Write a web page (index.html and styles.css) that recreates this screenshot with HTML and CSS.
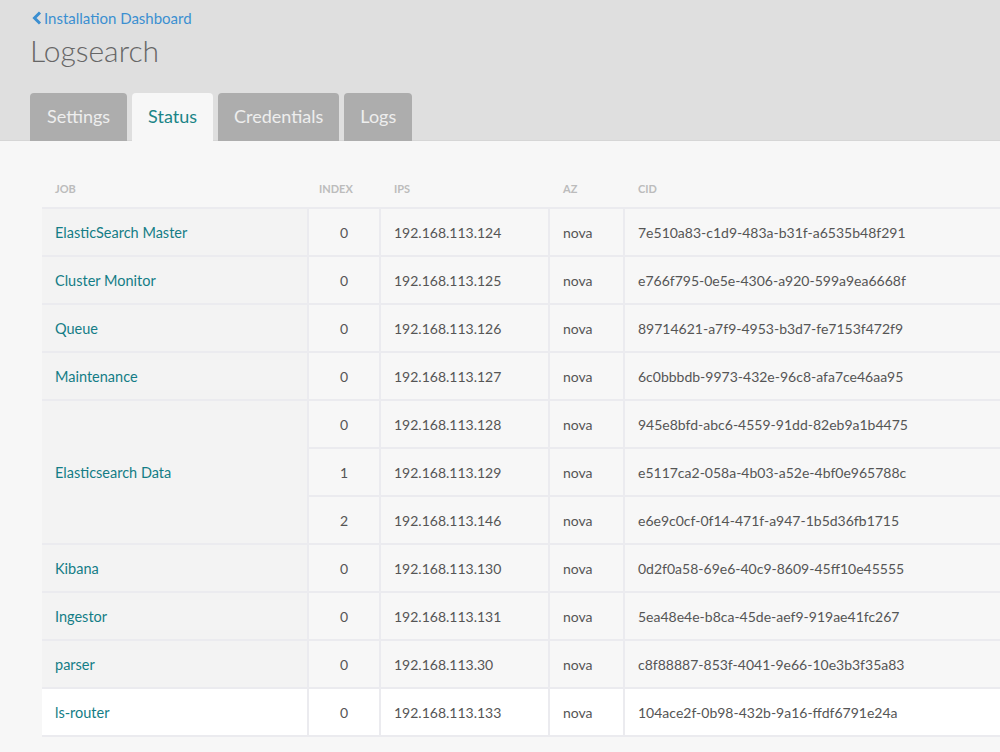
FILE: index.html
```html
<!DOCTYPE html>
<html>
<head>
<meta charset="utf-8">
<link rel="stylesheet" href="styles.css">
</head>
<body>
<header class="top">
  <a class="back" href="#"><svg class="chev" width="10" height="14" viewBox="0 0 10 14"><polyline points="8,1.5 2.5,7 8,12.5" fill="none" stroke="#3b8fd1" stroke-width="3" stroke-linejoin="miter"/></svg>Installation Dashboard</a>
  <h1 class="title">Logsearch</h1>
  <nav class="tabs">
    <a class="tab" href="#">Settings</a>
    <a class="tab active" href="#">Status</a>
    <a class="tab" href="#">Credentials</a>
    <a class="tab" href="#">Logs</a>
  </nav>
</header>
<main class="content">
  <table class="jobs">
    <thead>
      <tr><th class="c-job">Job</th><th class="c-idx">Index</th><th class="c-ip">IPs</th><th class="c-az">AZ</th><th class="c-cid">CID</th></tr>
    </thead>
    <tbody>
      <tr class="first"><td class="job">ElasticSearch Master</td><td class="idx">0</td><td>192.168.113.124</td><td>nova</td><td>7e510a83-c1d9-483a-b31f-a6535b48f291</td></tr>
      <tr><td class="job">Cluster Monitor</td><td class="idx">0</td><td>192.168.113.125</td><td>nova</td><td>e766f795-0e5e-4306-a920-599a9ea6668f</td></tr>
      <tr><td class="job">Queue</td><td class="idx">0</td><td>192.168.113.126</td><td>nova</td><td>89714621-a7f9-4953-b3d7-fe7153f472f9</td></tr>
      <tr><td class="job">Maintenance</td><td class="idx">0</td><td>192.168.113.127</td><td>nova</td><td>6c0bbbdb-9973-432e-96c8-afa7ce46aa95</td></tr>
      <tr><td class="job" rowspan="3">Elasticsearch Data</td><td class="idx">0</td><td>192.168.113.128</td><td>nova</td><td>945e8bfd-abc6-4559-91dd-82eb9a1b4475</td></tr>
      <tr><td class="idx">1</td><td>192.168.113.129</td><td>nova</td><td>e5117ca2-058a-4b03-a52e-4bf0e965788c</td></tr>
      <tr><td class="idx">2</td><td>192.168.113.146</td><td>nova</td><td>e6e9c0cf-0f14-471f-a947-1b5d36fb1715</td></tr>
      <tr><td class="job">Kibana</td><td class="idx">0</td><td>192.168.113.130</td><td>nova</td><td>0d2f0a58-69e6-40c9-8609-45ff10e45555</td></tr>
      <tr><td class="job">Ingestor</td><td class="idx">0</td><td>192.168.113.131</td><td>nova</td><td>5ea48e4e-b8ca-45de-aef9-919ae41fc267</td></tr>
      <tr><td class="job">parser</td><td class="idx">0</td><td>192.168.113.30</td><td>nova</td><td>c8f88887-853f-4041-9e66-10e3b3f35a83</td></tr>
      <tr class="hover"><td class="job">ls-router</td><td class="idx">0</td><td>192.168.113.133</td><td>nova</td><td>104ace2f-0b98-432b-9a16-ffdf6791e24a</td></tr>
    </tbody>
  </table>
</main>
</body>
</html>
```
FILE: styles.css
```css
html, body {
  margin: 0;
  padding: 0;
  background: #f7f7f7;
  overflow: hidden;
  font-family: Lato, "Noto Sans", sans-serif;
}
.top {
  background: #dfdfdf;
  padding: 9px 0 0 30px;
  height: 131px;
  box-sizing: content-box;
  border-bottom: 1px solid #d6d6d6;
  display: flex;
  flex-direction: column;
}
.back {
  display: flex;
  align-items: center;
  gap: 2px;
  color: #3b8fd1;
  text-decoration: none;
  font-size: 15px;
  height: 18px;
  margin-left: 2px;
}
.chev { display: block; }
.title {
  margin: 5px 0 0 0;
  font-size: 30px;
  font-weight: 300;
  color: #666;
  line-height: 36px;
  height: 36px;
}
.tabs {
  display: flex;
  gap: 5px;
  margin-top: auto;
}
.tab {
  display: block;
  height: 48px;
  line-height: 46px;
  padding: 0 16px;
  background: #adadad;
  color: #eeeeee;
  font-size: 18px;
  text-decoration: none;
  border-radius: 4px 4px 0 0;
  margin-bottom: -1px;
}
.tab:first-child { padding: 0 17px; }
.tab.active {
  background: #f7f7f7;
  color: #1b8587;
}
.content {
  padding: 29px 0 0 42px;
}
.jobs {
  border-collapse: separate;
  border-spacing: 0;
  width: 958px;
  table-layout: fixed;
  font-size: 14px;
  color: #555;
}
.jobs th {
  text-align: left;
  text-transform: uppercase;
  font-size: 11px;
  font-weight: 700;
  color: #bcbcbc;
  height: 37px;
  padding: 0 0 0 13px;
  border-left: 2px solid transparent;
}
.jobs th.c-job { width: 252px; padding-left: 13px; border-left: 0; }
.jobs th.c-idx { width: 60px; padding-left: 10px; }
.jobs th.c-ip { width: 154px; }
.jobs th.c-az { width: 60px; }
.jobs td {
  height: 46px;
  padding: 0 0 0 13px;
  background: #f7f7f7;
  border-left: 2px solid #ebebef;
  border-bottom: 2px solid #ebebef;
  white-space: nowrap;
}
.jobs tr.first td { border-top: 2px solid #ebebef; }
.jobs td.job {
  background: #f3f3f3;
  border-left: 0;
  padding-left: 13px;
  color: #137d86;
  font-size: 14.5px;
}
.jobs td.idx {
  text-align: center;
  padding: 0;
}
.jobs tr.hover td { background: #ffffff; }
```
